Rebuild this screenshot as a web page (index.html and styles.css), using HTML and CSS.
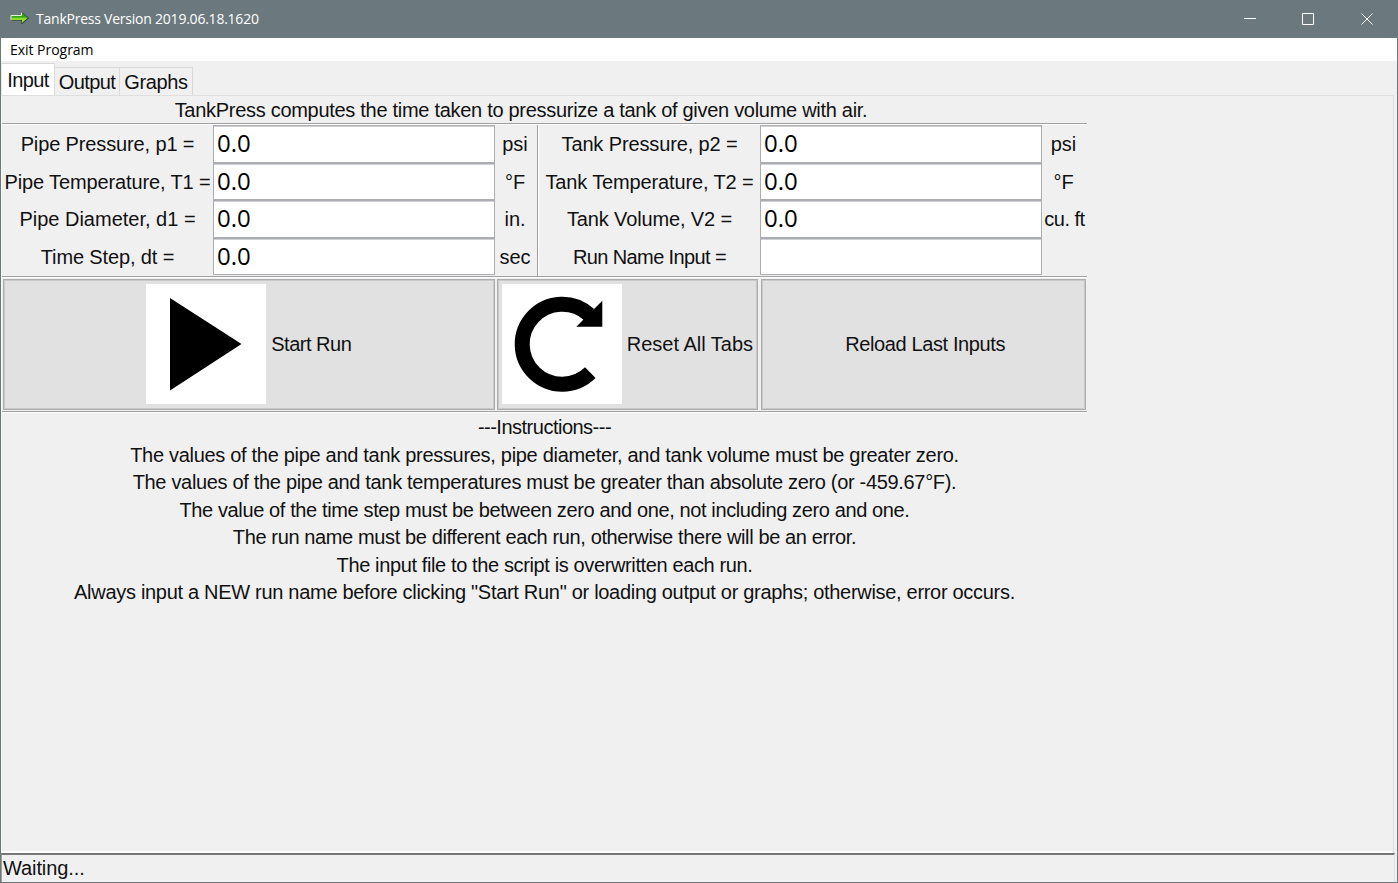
FILE: index.html
```html
<!DOCTYPE html>
<html lang="en">
<head>
<meta charset="utf-8">
<title>TankPress Version 2019.06.18.1620</title>
<link rel="stylesheet" href="styles.css">
</head>
<body>
<div class="window">
  <header class="titlebar">
    <svg class="app-icon" width="20" height="14" viewBox="0 0 20 14"><path d="M1 3.500H11.500V0L19 6L11.500 12.500V8.500H2Z" fill="#26361f"/><path d="M1 3.500H12V1L18 6H1Z" fill="#35a51c"/><path d="M1 5.800H18L12 11V8H2Z" fill="#8edb2c"/><path d="M1 8V3.500H11.500V.500" fill="none" stroke="#e3f0da"/></svg>
    <span class="title">TankPress Version 2019.06.18.1620</span>
    <svg class="controls" width="130" height="14" viewBox="0 0 130 14" fill="none" stroke="#fff"><path d="M0 6.500H12M58.500 1.500H69.500V12.500H58.500ZM117.500 1.500L128.500 12.500M128.500 1.500L117.500 12.500"/></svg>
  </header>
  <nav class="menubar"><span>Exit Program</span></nav>
  <nav class="tabs">
    <div class="tab active">Input</div>
    <div class="tab output">Output</div>
    <div class="tab graphs">Graphs</div>
  </nav>
  <main class="panel">
    <div class="form">
      <p class="intro">TankPress computes the time taken to pressurize a tank of given volume with air.</p>
      <section class="fields">
        <div class="group pipe">
          <label>Pipe Pressure, p1 =</label><div class="entry">0.0</div><span class="unit">psi</span>
          <label>Pipe Temperature, T1 =</label><div class="entry">0.0</div><span class="unit">°F</span>
          <label class="diameter">Pipe Diameter, d1 =</label><div class="entry">0.0</div><span class="unit">in.</span>
          <label>Time Step, dt =</label><div class="entry">0.0</div><span class="unit">sec</span>
        </div>
        <div class="group tank">
          <label>Tank Pressure, p2 =</label><div class="entry">0.0</div><span class="unit">psi</span>
          <label>Tank Temperature, T2 =</label><div class="entry">0.0</div><span class="unit">°F</span>
          <label>Tank Volume, V2 =</label><div class="entry">0.0</div><span class="unit volume">cu. ft</span>
          <label class="run-name">Run Name Input =</label><div class="entry"></div><span class="unit"></span>
        </div>
      </section>
      <section class="actions">
        <div class="button start"><svg class="picture" width="120" height="120" viewBox="0 0 120 120"><path d="M24 14L95.500 60L24 106.500Z"/></svg><span>Start Run</span></div>
        <div class="button reset"><svg class="picture" width="120" height="120" viewBox="0 0 120 120"><path d="M88.300 88.700A40 40 0 1 1 87 30.500" fill="none" stroke="#000" stroke-width="15"/><path d="M100.300 16.700V42.700H74.300L81 36L86 30L91.500 25.500Z"/></svg><span>Reset All Tabs</span></div>
        <div class="button reload"><span>Reload Last Inputs</span></div>
      </section>
      <section class="instructions">
        <p class="i0">---Instructions---</p>
        <p class="i1">The values of the pipe and tank pressures, pipe diameter, and tank volume must be greater zero.</p>
        <p class="i2">The values of the pipe and tank temperatures must be greater than absolute zero (or -459.67°F).</p>
        <p class="i3">The value of the time step must be between zero and one, not including zero and one.</p>
        <p class="i4">The run name must be different each run, otherwise there will be an error.</p>
        <p class="i5">The input file to the script is overwritten each run.</p>
        <p class="i6">Always input a NEW run name before clicking "Start Run" or loading output or graphs; otherwise, error occurs.</p>
      </section>
    </div>
  </main>
  <footer class="status"><span>Waiting...</span></footer>
</div>
</body>
</html>
```
FILE: styles.css
```css
* { box-sizing: border-box; }
body { margin: 0; }
p { margin: 0; }
.window { width: 1398px; height: 883px; display: flex; flex-direction: column; background: #f0f0f0; border: solid #6b797e; border-width: 0 1px 1px; font: 20px/27.5px "Liberation Sans", Arial, sans-serif; color: #111; white-space: nowrap; overflow: hidden; }
.titlebar { height: 38px; flex: none; background: #6b797e; display: flex; align-items: center; padding: 0 23px 0 9px; color: #fff; font: 14px/20px "Open Sans", sans-serif; }
.title { margin-left: 6px; letter-spacing: -.23px; }
.controls { margin-left: auto; }
.menubar { height: 23px; flex: none; background: #fff; padding: 2px 0 0 9px; font: 14px/20px "Open Sans", sans-serif; color: #000; letter-spacing: -.03px; }
.tabs { height: 34px; flex: none; display: flex; align-items: flex-end; padding-top: 2px; }
.tab { border: 1px solid #d9d9d9; border-left: 0; border-bottom: 0; height: 28px; line-height: 29px; width: 65px; text-align: center; letter-spacing: -.6px; }
.tab.active { width: 54px; height: 32px; background: #fff; line-height: 33px; border-left: 1px solid #e6e6e6; }
.tab.graphs { width: 73px; letter-spacing: -.35px; }
.panel { height: 758px; flex: none; margin-right: 3px; border: solid #dfdfdf; border-width: 1px 1px 0 1px; border-left-color: #f7f7f7; box-shadow: inset 0 -2px #fff; }
.form { width: 1085px; }
.intro { height: 27px; line-height: 29px; padding-right: 47px; text-align: center; letter-spacing: -.29px; }
.fields { display: flex; height: 154px; border-top: 1px solid #a0a0a0; border-bottom: 1px solid #a0a0a0; box-shadow: inset 0 1px #fff, 0 1px #fff; padding-top: 1px; }
.group { display: grid; grid-template-rows: 38px 37px 38px 37px; text-align: center; line-height: 39px; }
.group label { letter-spacing: -.13px; }
.group .diameter { letter-spacing: 0; }
.group .run-name { letter-spacing: -.62px; }
.pipe { grid-template-columns: 211px 282px 40px; border-right: 1px solid #a0a0a0; width: 536px; }
.tank { grid-template-columns: 221px 282px 43px; border-left: 1px solid #fff; }
.unit.volume { letter-spacing: -.5px; padding-left: 2px; }
.entry { background: #fff; border: 1px solid #abadb3; box-shadow: inset 0 1px #d0d1d4; padding-left: 3px; text-align: left; font: 24px/34px "Open Sans", sans-serif; color: #000; }
.actions { display: flex; gap: 2px; height: 135px; padding: 2px 1px 2px; border-bottom: 1px solid #a0a0a0; box-shadow: 0 1px #fff; }
.button { height: 131px; background: #e1e1e1; border: 1px solid #adadad; box-shadow: inset 0 0 0 1px #c8c8c8; display: flex; align-items: center; justify-content: center; gap: 5px; }
.button span { padding-top: 1px; }
.start { width: 492px; letter-spacing: -.5px; }
.reset { width: 262px; }
.reload { width: 325px; margin-left: 1px; letter-spacing: -.39px; padding-left: 3px; }
.picture { background: #fff; margin-bottom: 2px; }
.instructions { padding-top: 2px; text-align: center; letter-spacing: -.3px; }
.i0 { letter-spacing: -.5px; }
.i2 { letter-spacing: -.32px; }
.i3, .i4, .i5 { letter-spacing: -.375px; }
.status { flex: 1; margin-right: 2px; border: 1px solid #a0a0a0; border-top: 2px solid #777; border-right-color: #e3e3e3; border-bottom-color: #e3e3e3; padding-left: 1px; letter-spacing: -.1px; }
```
